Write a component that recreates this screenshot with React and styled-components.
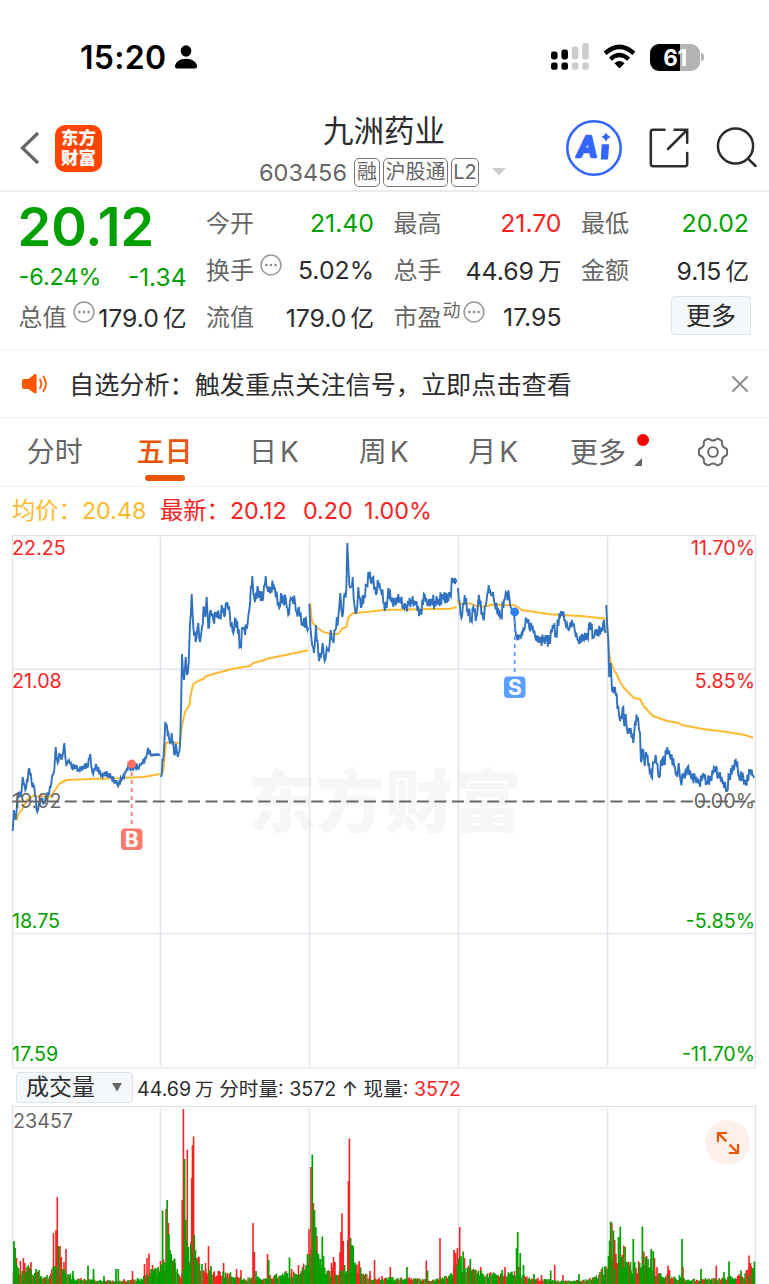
import React from "react";
import styled, { createGlobalStyle } from "styled-components";

const GREEN = "#00a000";
const RED = "#fb2222";
const INK = "#2c2c2e";
const GREY = "#666666";
const ORANGE = "#ea5504";
const FONT = `Inter, "Noto Sans CJK SC", sans-serif`;

// one entry per trading day, [x, y] pairs
const PRICE_DAYS = [
  [[12.7,831],[14,810],[15.7,819],[18.3,792],[20.7,797],[22.7,777],[25.3,790],[29.3,768],[31.7,783],[34.3,787],[37.3,812],[40.7,798],[44,802],[48.3,795],[50.7,787],[52.3,775],[54.3,770],[55.7,747],[57.7,763],[59.3,753],[62.3,757],[64.3,743],[66.3,765],[69,760],[71.7,768],[75,765],[78.3,770],[83.3,766],[87.3,767],[90.3,754],[92.3,772],[96.7,767],[101.7,775],[105,772],[111.7,777],[117.3,785],[121.7,780],[125,772],[129.3,767],[135,767],[138,767],[141.7,763],[146,758],[148,748],[150.7,755],[160,754.5]],
  [[161,777],[163.3,760],[165.3,722],[168.3,733],[170,743],[171.7,733],[174,753],[176.7,750],[178.7,753],[180.3,737],[182,654],[184,680],[185.7,657],[187,675],[188.7,663],[190,623],[191.7,594],[193.3,627],[195.7,642],[198.3,623],[200,642],[202,627],[204.3,608],[205.3,617],[206.7,597],[208.3,628],[210.7,610],[213.3,620],[216.7,612],[220,617],[221.7,605],[224.3,617],[227.3,602],[230,617],[233.3,633],[235.7,619],[240.3,645],[242.7,628],[246.7,629],[249.3,610],[252.3,576],[254.3,598],[258.3,590],[262.3,601],[265.7,576],[267.3,588],[270.7,587],[275,589],[279.3,608],[281,593],[283.3,602],[285.7,598],[288.3,615],[290.7,598],[295,602],[296.7,612],[299,608],[302.3,625],[304,618],[306.7,627],[308.3,627.5]],
  [[309.3,604],[311.3,637],[314,653],[316,625],[318.3,653],[320.7,658],[322.7,643],[324.7,661],[326.7,648],[328.7,651],[330.7,630],[332.7,640],[335.3,630],[338.3,617],[340.3,593],[342.3,617],[344.7,593],[346.3,590],[347.3,543],[349.3,585],[351,587],[352.7,577],[354.7,607],[356.3,613],[358.3,587],[361,608],[364,595],[366.7,585],[368.3,572],[370.7,582],[373.3,577],[376,595],[377.7,580],[381,590],[384,603],[386.7,608],[388.3,588],[390.7,600],[395,602],[400,600],[403.3,606],[406,607],[408,601],[415,602],[420.7,612],[424.7,595],[427.3,605],[431.7,602],[437.3,602],[442.7,597],[450,595],[452.7,580],[456.7,582]],
  [[458,588],[461.3,618],[464.7,595],[467.7,610],[471,620],[473.3,607],[476.3,617],[479,595],[483,618],[485.7,605],[488.7,585],[491,595],[493,592],[495,605],[501,616],[504,600],[506.7,593],[509.3,597],[511.3,608],[514.3,617],[516,635],[520,637],[524,630],[526.7,620],[529.3,628],[532.7,627],[535.3,638],[539.3,642],[544,637],[549.3,643],[552.7,625],[556,635],[559.3,615],[562,612],[565,620],[568.7,630],[572,620],[574.7,630],[578.3,641],[583.3,637],[587.3,638],[590.3,622],[593.3,638],[596,630],[601.7,631],[604,620],[606,632]],
  [[606.3,605],[608.3,640],[609.2,677],[610.7,663],[612,690],[615,687],[619,715],[621,717],[623.3,707],[624.2,726],[625.7,714],[627.7,733],[630.7,728],[633.3,743],[635,723],[638,717],[640,733],[640.9,762],[643.3,750],[644.7,766],[646,752],[651.3,777],[653.7,763],[655.7,755],[659,777],[661.7,760],[664,763],[667.3,747],[670,757],[675,767],[677.3,777],[678.7,763],[680.7,781],[684,775],[688.3,766],[691,778],[695,777],[699.3,783],[703.3,774],[706.7,782],[710.7,779],[714.7,768],[718.3,775],[723.3,782],[727,791],[729.3,775],[733.3,770],[735.7,760],[739,777],[743.3,777],[745.7,783],[750,770],[754,778]],
];

const AVERAGE_DAYS = [
  [[16.7,820],[18.5,814],[21.7,810],[26.7,800],[33,796],[50,797],[55,790],[60,783],[66.7,780],[90,779],[117,778.3],[143,777],[152,775.5],[160,774]],
  [[161,776],[163.3,770],[164.3,760],[166,743],[170,742],[180,743],[181.7,727],[185,712],[189.3,705],[191,693],[193.3,684],[198.3,681],[203,679],[206.7,676],[216.7,673],[233.3,668.7],[250,666],[253.3,663],[265,660],[267,658.7],[286.7,654.7],[308.3,650.3]],
  [[310,603],[312,622],[316.7,627.3],[323.3,632],[331,634],[338.3,634],[341.7,629],[346.7,626.7],[348.3,617.3],[352.7,613.3],[366.7,612],[383.3,610],[406,609.6],[433.3,609],[450,608.7],[456.7,607]],
  [[458,600],[458.7,604],[470,603.3],[475,605.7],[483.3,606.7],[491.7,604.7],[515,605.3],[521.7,610],[550,614.3],[583.3,616.3],[606.7,618.7]],
  [[606.7,618.7],[608,640],[609.3,655],[611,663],[614,670],[617,675],[620,682],[623.3,687],[628,692],[634,698],[640,699],[643,705],[649,712],[653,716],[667,721],[678,722.7],[681.7,725],[703,729],[727,732],[745,735],[753,737.7]],
];

// x, top, then g/r
const SPIKES = `14 1241 g,15.2 1248 g,16.5 1258 r,18 1268 r,20.4 1261 r,23.4 1258 r,24.8 1263 r,28 1267 r,29.5 1268 r,31 1262 r,36 1269 g,39 1270 g,
53.5 1233 r,54.8 1266 g,56 1230 r,57.3 1197 r,58.6 1246 g,60 1246 r,61.3 1257 r,62.5 1269 g,64 1262 r,66 1249 r,70 1275 g,73 1271 g,81 1278 r,88 1265.5 g,93.5 1269 g,104 1276 g,116 1269 g,118.3 1269 g,124 1279 r,132.5 1271 r,
144.5 1264 r,147 1258 r,149 1253.5 r,151 1269 g,152.5 1265 r,155 1268 g,158 1267 g,160.5 1261 r,162.6 1210.5 g,164 1262 g,166 1209 r,167.2 1200 g,168.4 1223 r,168.9 1234 g,170 1250 g,171.2 1254 g,172.5 1261 r,173.7 1260 r,175 1263 g,
182.2 1200 r,183.4 1109 r,184.6 1159 g,185.8 1220 g,186.4 1241 g,187.3 1149.5 r,188.5 1247 g,190 1262 r,191 1242 r,191.7 1178 r,192.5 1145 r,193.6 1136.5 r,194.3 1235 g,195.4 1250 g,196.8 1258 r,199 1257 r,205.5 1263 r,208.5 1246 r,211 1266 g,214 1272 r,220 1272 r,223.6 1263 r,227.5 1273 r,236.5 1269 r,241 1270 r,
253 1223 r,254.4 1252 r,256 1271 g,267.5 1254 r,268.7 1260 g,275 1275 r,286 1271 r,289.5 1257.5 g,291.7 1269 r,298.5 1265 r,303.5 1266 r,307.5 1254 g,
309 1229 r,311 1167 r,312.3 1154.5 g,313.4 1203 r,314.5 1210 g,315.8 1227 g,317 1236 r,318.5 1254 g,320.3 1259 g,322.3 1236.5 g,323.5 1256 g,331.5 1263 r,333.5 1257 r,335 1262 r,340 1252 r,341 1232 r,342 1213.5 r,343.3 1241 r,344.6 1265 g,347.8 1240 r,348.4 1181 r,349.4 1138.5 r,350.6 1238 g,352 1245 g,353.2 1246 g,355 1263 g,359 1261 r,370 1271 r,374.5 1260 r,382 1276 r,
390.3 1267 r,407 1267 g,426.3 1260.5 r,427.5 1270.5 g,440 1238 r,454 1250 r,455.5 1253 r,457.4 1248 r,459.7 1227 r,461 1256 g,463.2 1251.5 g,464.5 1258 r,470.3 1259 g,472 1271 g,476 1270 r,480.7 1267 r,489.5 1273 r,502.3 1270 g,505 1267 r,516.6 1248 g,517.7 1232 g,518.8 1267 r,520.2 1253 g,523.5 1265 g,534 1274 g,541.5 1275 r,550.7 1270.5 g,554.7 1265 r,563 1275 r,579 1274 g,595 1277 g,602 1274 r,605.3 1269 r,
608.5 1256 g,609.6 1241 g,610.6 1221.5 g,611.9 1223 r,613.4 1230.5 g,614.7 1240 r,615.9 1254 r,618.5 1237 g,620.3 1226.5 g,622 1257 g,623.8 1245.5 r,625.2 1247 g,627 1262 g,628.5 1263 r,630.5 1262 g,633.3 1239 g,635 1268 r,642.4 1226.5 g,643.8 1251.5 r,645.5 1257 g,646.6 1256 r,648 1259 g,651.2 1249 g,653.2 1251 g,654.5 1258 r,657 1267 r,668 1265.5 r,669.5 1270 r,679.5 1275 g,682 1239 g,683 1267 r,701 1269 g,705.5 1278 g,716.3 1265.5 r,724 1272 g,729 1261.5 g,741 1270.5 g,737.5 1276 r,749 1255.5 r,750.6 1263 r,752.5 1268 g,754.4 1261.5 g`
  .split(",")
  .map((s) => s.trim().split(" "));

// usual height of the small bars along the day
const ENVELOPE = [[13,18],[30,14],[45,5],[54,14],[66,12],[76,4],[100,3],[125,2],[142,5],[155,12],[160,18],[175,22],[181,5],[186,30],[194,32],[200,18],[215,10],[232,10],[244,4],[262,6],[290,10],[302,12],[309,28],[318,26],[327,12],[345,18],[352,30],[362,12],[372,4],[385,5],[410,5],[435,3],[450,8],[459,22],[466,16],[478,12],[500,8],[515,10],[530,5],[560,2],[585,3],[598,7],[608,20],[620,26],[632,16],[650,22],[658,10],[672,6],[700,3],[730,6],[745,9],[755,18]];

const GRID_X = [160.5, 309.5, 458.5, 607.5];

// the latin part of a label stands a little apart
const TABS = [
  { label: "分时" },
  { label: "五日", active: true },
  { label: "日", period: "K" },
  { label: "周", period: "K" },
  { label: "月", period: "K" },
];

const noise = (n) => {
  const v = Math.sin(n * 127.1 + 3.7) * 43758.5453;
  return v - Math.floor(v);
};

const lerpAt = (points, x) => {
  for (let i = 1; i < points.length; i++) {
    const [x0, y0] = points[i - 1];
    const [x1, y1] = points[i];
    if (x <= x1) return y0 + ((y1 - y0) * (x - x0)) / (x1 - x0);
  }
  return points[points.length - 1][1];
};

const toPath = (points) => "M" + points.map((p) => p.join(" ")).join("L");

// adds the tick by tick jitter between the traced turns
const jagged = (points, amp) => {
  const out = [points[0]];
  for (let i = 1; i < points.length; i++) {
    const [x0, y0] = points[i - 1];
    const [x1, y1] = points[i];
    const steps = Math.floor((x1 - x0) / 0.75);
    const calm = x0 > 150 && x1 < 161 ? 0.15 : 1;
    for (let s = 1; s < steps; s++) {
      const x = x0 + ((x1 - x0) * s) / steps;
      const sign = s % 2 ? 1 : -1;
      const y = lerpAt([points[i - 1], points[i]], x) + sign * calm * (0.5 + noise(x) * amp);
      out.push([x.toFixed(1), y.toFixed(1)]);
    }
    out.push([x1, y1]);
  }
  return toPath(out);
};

const JITTER = [3.5, 7, 7, 6.5, 5.5];

const volumePath = (color) => {
  let d = "";
  for (let i = 0; i < 598; i++) {
    const x = 13.5 + i * 1.24;
    const isGreen = noise(i + 900) > 0.42;
    if (isGreen !== (color === "g")) continue;
    const h = 1 + lerpAt(ENVELOPE, x) * (0.5 + noise(i) * 0.75);
    d += `M${x.toFixed(1)} 1286V${(1284 - h).toFixed(1)}`;
  }
  return d;
};

const spikePath = (color) =>
  SPIKES.filter((s) => s[2] === color).map((s) => `M${s[0]} 1286V${s[1]}`).join("");

const Dots = () => (
  <DotsIcon viewBox="0 0 22 22">
    <circle cx="11" cy="11" r="9.9" fill="none" stroke="#999" strokeWidth="1.5" />
    <circle cx="6.4" cy="11" r="1.3" fill="#888" />
    <circle cx="11" cy="11" r="1.3" fill="#888" />
    <circle cx="15.6" cy="11" r="1.3" fill="#888" />
  </DotsIcon>
);

const StatusArea = () => (
  <StatusBar>
    <Clock>15:20</Clock>
    <svg width="22" height="24" viewBox="0 0 22 24">
      <ellipse cx="11" cy="6" rx="5.3" ry="5.8" />
      <path d="M0 21.5C0 17 5 13.7 11 13.7S22 17 22 21.5Q22 23.6 20 23.6H2Q0 23.6 0 21.5Z" />
    </svg>
    <StatusRight>
      <svg width="38" height="28" viewBox="0 0 38 28">
        <rect x="0" y="8.5" width="6.6" height="8" rx="2.4" />
        <rect x="10.4" y="6.5" width="6.6" height="10" rx="2.4" />
        <rect x="20.8" y="3.5" width="6.6" height="13" rx="2.4" fill="#ccc" />
        <rect x="31.2" y="0" width="6.6" height="16.5" rx="2.4" fill="#ccc" />
        <rect x="0" y="19.5" width="6.6" height="7.3" rx="2.2" />
        <rect x="10.4" y="19.5" width="6.6" height="7.3" rx="2.2" />
        <rect x="20.8" y="19.5" width="6.6" height="7.3" rx="2.2" fill="#ccc" />
        <rect x="31.2" y="19.5" width="6.6" height="7.3" rx="2.2" fill="#ccc" />
      </svg>
      <svg width="33" height="26" viewBox="0 0 34 26">
        <path d="M2.2 9.1Q17 -4 31.8 9.1" fill="none" stroke="#000" strokeWidth="4.6" />
        <path d="M7.6 15.2Q17 6.8 26.4 15.2" fill="none" stroke="#000" strokeWidth="4.4" />
        <path d="M11.8 19.4Q17 14.6 22.2 19.4L17.8 24Q17 24.7 16.2 24Z" />
      </svg>
      <Battery>
        <BatteryBody>61</BatteryBody>
        <BatteryTip />
      </Battery>
    </StatusRight>
  </StatusBar>
);

const TopBar = () => (
  <Header>
    <BackIcon viewBox="0 0 20 34">
      <path d="M18 2L2.4 17L18 32" fill="none" stroke="#666" strokeWidth="3.2" />
    </BackIcon>
    <AppLogo>东方财富</AppLogo>
    <StockTitle>
      <StockName>九洲药业</StockName>
      <StockMeta>
        <StockCode>603456</StockCode>
        <Tag $w={26}>融</Tag>
        <Tag $w={65}>沪股通</Tag>
        <Tag $w={28}>L2</Tag>
        <svg width="14" height="8" viewBox="0 0 14 8">
          <path d="M0 0H14L7 7.4Z" fill="#ccc" />
        </svg>
      </StockMeta>
    </StockTitle>
    <Actions>
      <svg width="56" height="56" viewBox="0 0 56 56">
        <circle cx="28" cy="28" r="26.7" fill="none" stroke="#3366ff" strokeWidth="2.6" />
        <text x="11.5" y="37.4" fontFamily="Lato, Inter, sans-serif" fontStyle="italic" fontWeight="900" fontSize="29" fill="#3366ff" stroke="#3366ff" strokeWidth="2.6" strokeLinejoin="round">A</text>
        <path d="M36.4 24.2H42.2Q43.2 24.2 43.1 25.2L42.1 38.4Q42 39.6 40.8 39.6H36Q34.8 39.6 34.9 38.4L35.6 25Q35.6 24.2 36.4 24.2Z" fill="#3366ff" />
        <path d="M40 12.4Q41.2 15.8 44.6 17Q41.2 18.2 40 21.6Q38.8 18.2 35.4 17Q38.8 15.8 40 12.4Z" fill="#3366ff" />
      </svg>
      <svg width="40" height="40" viewBox="0 0 40 40" fill="none" stroke="#2c2c2e" strokeWidth="2.5" strokeLinecap="round">
        <path d="M15.5 1.8H4Q1.8 1.8 1.8 4V36Q1.8 38.2 4 38.2H36Q38.2 38.2 38.2 36V25" />
        <path d="M25.5 1.8H38.2V14.8M38 2L19 21" />
      </svg>
      <svg width="42" height="42" viewBox="0 0 42 42" fill="none" stroke="#2c2c2e" strokeWidth="2.5">
        <circle cx="19.5" cy="19" r="17.6" />
        <path d="M32 31.6L39.6 39" strokeLinecap="round" />
      </svg>
    </Actions>
  </Header>
);

const QuotePanel = () => (
  <Quote>
    <QuoteColumn>
      <BigPrice>20.12</BigPrice>
      <ChangeRow>
        <ChangeRate>-6.24%</ChangeRate>
        <span>-1.34</span>
      </ChangeRow>
      <QuoteRow>
        <Label>总值<Dots /></Label>
        <Value>179.0<Unit>亿</Unit></Value>
      </QuoteRow>
    </QuoteColumn>
    <QuoteColumn>
      <QuoteRow><Label>今开</Label><Value $color={GREEN}>21.40</Value></QuoteRow>
      <QuoteRow><Label>换手<Dots /></Label><Value>5.02%</Value></QuoteRow>
      <QuoteRow><Label>流值</Label><Value>179.0<Unit>亿</Unit></Value></QuoteRow>
    </QuoteColumn>
    <QuoteColumn>
      <QuoteRow><Label>最高</Label><Value $color={RED}>21.70</Value></QuoteRow>
      <QuoteRow><Label>总手</Label><Value>44.69<Unit>万</Unit></Value></QuoteRow>
      <QuoteRow><Label>市盈<Super>动</Super><Dots /></Label><Value>17.95</Value></QuoteRow>
    </QuoteColumn>
    <QuoteColumn>
      <QuoteRow><Label>最低</Label><Value $color={GREEN}>20.02</Value></QuoteRow>
      <QuoteRow><Label>金额</Label><Value>9.15<Unit>亿</Unit></Value></QuoteRow>
      <MoreButton>更多</MoreButton>
    </QuoteColumn>
  </Quote>
);

const NoticeBar = () => (
  <Notice>
    <svg width="26" height="22" viewBox="0 0 26 22">
      <path d="M2 6H6.5L12.4 1.2Q14.6 0 14.6 2.4V19Q14.6 21.4 12.4 20.2L6.5 16H2Q0 16 0 14V8Q0 6 2 6Z" fill="#ff5500" />
      <path d="M18 6.5Q20.6 10.8 18 15M21.4 3.5Q26.4 10.8 21.4 18" fill="none" stroke="#ff5500" strokeWidth="1.8" strokeLinecap="round" />
    </svg>
    <NoticeText>自选分析：触发重点关注信号，立即点击查看</NoticeText>
    <svg width="16" height="16" viewBox="0 0 16 16">
      <path d="M1 1L15 15M15 1L1 15" stroke="#888" strokeWidth="1.8" strokeLinecap="round" />
    </svg>
  </Notice>
);

const ChartTabs = () => (
  <Tabs>
    {TABS.map((tab) => (
      <Tab key={tab.label} $active={tab.active}>
        {tab.label}
        {tab.period && <Period>{tab.period}</Period>}
      </Tab>
    ))}
    <MoreTab>
      更多
      <RedDot />
      <Corner viewBox="0 0 8 8"><path d="M8 0V8H0Z" fill="#666" /></Corner>
    </MoreTab>
    <GearIcon viewBox="0 0 32 32" fill="none" stroke="#666" strokeWidth="2.1">
      <circle cx="16" cy="16" r="5.2" />
      <path d="M9.6 2.2Q11.2 1.4 12.4 2.4Q16 5.2 19.6 2.4Q20.8 1.4 22.4 2.2L24.6 3.6Q26 4.6 25.7 6.2Q25.4 10.6 29.4 12Q31 12.6 31 14V18Q31 19.4 29.4 20Q25.4 21.4 25.7 25.8Q26 27.4 24.6 28.4L22.4 29.8Q20.8 30.6 19.6 29.6Q16 26.8 12.4 29.6Q11.2 30.6 9.6 29.8L7.4 28.4Q6 27.4 6.3 25.8Q6.6 21.4 2.6 20Q1 19.4 1 18V14Q1 12.6 2.6 12Q6.6 10.6 6.3 6.2Q6 4.6 7.4 3.6Z" />
    </GearIcon>
  </Tabs>
);

const PriceChart = () => (
  <PriceSvg viewBox="0 535 769 534">
    <text x="248" y="827" fontSize="68" fontWeight="900" fill="#f6f6f6" textLength="273">东方财富</text>
    <g stroke="#e2e5ef" strokeWidth="1.6">
      {GRID_X.map((x) => <path key={x} d={`M${x} 537V1066`} />)}
      <path d="M12.5 669.3H755M12.5 933.5H755" />
    </g>
    <path d="M12.5 1068V535.5H755.5V1068Z" fill="none" stroke="#dcdfe6" strokeWidth="1.2" />
    <g fill="none" stroke="#ffb92e" strokeWidth="2" strokeLinejoin="round">
      {AVERAGE_DAYS.map((day, i) => <path key={i} d={toPath(day)} />)}
    </g>
    <g fill="none" stroke="#3072c0" strokeWidth="1.9">
      {PRICE_DAYS.map((day, i) => <path key={i} d={jagged(day, JITTER[i])} />)}
    </g>
    <AxisText x="12" y="555" fill={RED}>22.25</AxisText>
    <AxisText x="12" y="688" fill={RED}>21.08</AxisText>
    <AxisText x="12" y="807.5" fill={GREY}>19.92</AxisText>
    <AxisText x="12" y="928" fill={GREEN}>18.75</AxisText>
    <AxisText x="12" y="1061" fill={GREEN}>17.59</AxisText>
    <AxisText x="755" y="555" fill={RED} textAnchor="end">11.70%</AxisText>
    <AxisText x="755" y="688" fill={RED} textAnchor="end">5.85%</AxisText>
    <AxisText x="755" y="807.5" fill={GREY} textAnchor="end">0.00%</AxisText>
    <AxisText x="755" y="928" fill={GREEN} textAnchor="end">-5.85%</AxisText>
    <AxisText x="755" y="1061" fill={GREEN} textAnchor="end">-11.70%</AxisText>
    <path d="M12 801.5H755" stroke="#666" strokeWidth="2" strokeDasharray="12 5.6" />
    <path d="M131.7 764V828" stroke="#fd7a6c" strokeWidth="1.8" strokeDasharray="4 4" />
    <circle cx="131.7" cy="764" r="4.4" fill="#fd7061" />
    <rect x="121" y="828.5" width="21.5" height="21.5" rx="4" fill="#fd7a6c" />
    <MarkText x="131.8" y="847">B</MarkText>
    <path d="M514.7 612V676" stroke="#5ba0ff" strokeWidth="1.8" strokeDasharray="4 4" />
    <circle cx="514.7" cy="612" r="4.4" fill="#2f80f5" />
    <rect x="504" y="676.5" width="21.5" height="21.5" rx="4" fill="#5ba0ff" />
    <MarkText x="514.8" y="695">S</MarkText>
  </PriceSvg>
);

const VolumeChart = () => (
  <VolumeBox>
    <VolumeSvg viewBox="0 1106 769 178">
      <g stroke="#e2e5ef" strokeWidth="1.6">
        {GRID_X.map((x) => <path key={x} d={`M${x} 1109V1284`} />)}
      </g>
      <path d="M12.5 1286V1106.5H755.5V1286" fill="none" stroke="#dcdfe6" strokeWidth="1.2" />
      <AxisText x="13" y="1128" fill={GREY}>23457</AxisText>
      <path d={volumePath("r")} stroke="#fb2222" strokeWidth="1.4" />
      <path d={spikePath("r")} stroke="#fb2222" strokeWidth="1.6" />
      <path d={volumePath("g")} stroke={GREEN} strokeWidth="1.6" />
      <path d={spikePath("g")} stroke={GREEN} strokeWidth="1.7" />
    </VolumeSvg>
    <ExpandButton>
      <svg width="24" height="24" viewBox="0 0 24 24" fill="none" stroke={ORANGE} strokeWidth="2.2">
        <path d="M11 2H2V11M2.4 2.4L10.4 10.4M13 22H22V13M21.6 21.6L13.6 13.6" />
      </svg>
    </ExpandButton>
  </VolumeBox>
);

export default function App() {
  return (
    <Screen>
      <GlobalStyle />
      <StatusArea />
      <TopBar />
      <QuotePanel />
      <NoticeBar />
      <ChartTabs />
      <Legend>
        <LegendItem $color="#fdb92c" $w={148}>均价：<span>20.48</span></LegendItem>
        <LegendItem $color={RED} $w={143}>最新：<span>20.12</span></LegendItem>
        <LegendItem $color={RED} $w={61}><span>0.20</span></LegendItem>
        <LegendItem $color={RED} $w={80}><span>1.00%</span></LegendItem>
      </Legend>
      <PriceChart />
      <VolumeBar>
        <VolumeSelect>
          成交量
          <svg width="10" height="9" viewBox="0 0 10 9"><path d="M0 0H10L5 8.6Z" fill="#666" /></svg>
        </VolumeSelect>
        <VolumeInfo>
          44.69<Unit>万</Unit> 分时量: 3572 ↑ 现量: <Hot>3572</Hot>
        </VolumeInfo>
      </VolumeBar>
      <VolumeChart />
    </Screen>
  );
}

const GlobalStyle = createGlobalStyle`
  * { box-sizing: border-box; }
  body { margin: 0; background: #fff; overflow: hidden; }
  svg { display: block; flex: none; }
`;

const Screen = styled.div`
  width: 769px;
  height: 1284px;
  overflow: hidden;
  background: #fff;
  color: ${INK};
  font-family: ${FONT};
  white-space: nowrap;
`;

const StatusBar = styled.div`
  height: 106px;
  padding: 8px 65px 0 80px;
  display: flex;
  align-items: center;
  gap: 9px;
`;

const Clock = styled.div`
  width: 86px;
  color: #000;
  font-size: 32px;
  font-weight: 600;
  letter-spacing: 0.3px;
`;

const StatusRight = styled.div`
  margin-left: auto;
  display: flex;
  align-items: center;
  gap: 14px;
`;

const Battery = styled.div`
  display: flex;
  align-items: center;
  gap: 1px;
`;

const BatteryBody = styled.div`
  width: 50px;
  height: 27px;
  border-radius: 9px;
  background: linear-gradient(90deg, #000 61%, #b3b3b3 61%);
  color: #fff;
  font-size: 22.5px;
  font-weight: 700;
  letter-spacing: -0.5px;
  line-height: 28px;
  text-align: center;
`;

const BatteryTip = styled.div`
  width: 3px;
  height: 8px;
  border-radius: 0 3px 3px 0;
  background: #b3b3b3;
`;

const Header = styled.header`
  height: 86px;
  display: flex;
  align-items: center;
  padding: 0 11px 0 20px;
  border-bottom: 2px solid #ececec;
`;

const BackIcon = styled.svg`
  width: 20px;
  height: 34px;
`;

const AppLogo = styled.div`
  width: 47px;
  height: 47px;
  margin-left: 15px;
  padding: 3px 6px;
  border-radius: 10px;
  background: #ff4400;
  color: #fff;
  font-size: 17.4px;
  font-weight: 900;
  line-height: 20px;
  white-space: normal;
`;

const StockTitle = styled.div`
  width: 250px;
  margin-left: 157px;
  padding-top: 4px;
  display: flex;
  flex-direction: column;
`;

const StockName = styled.div`
  width: 250px;
  text-align: center;
  font-size: 30.5px;
  line-height: 40px;
`;

const StockMeta = styled.div`
  height: 38px;
  padding-top: 4px;
  display: flex;
  align-items: center;
  gap: 3px;
  svg { margin-left: 10px; }
`;

const StockCode = styled.div`
  width: 92px;
  color: ${GREY};
  font-size: 23.5px;
`;

const Tag = styled.div`
  width: ${({ $w }) => $w}px;
  height: 29px;
  border: 1.4px solid #777;
  border-radius: 5px;
  color: ${GREY};
  font-size: 20px;
  line-height: 27px;
  text-align: center;
`;

const Actions = styled.div`
  margin-left: auto;
  display: flex;
  align-items: center;
  gap: 27px;
`;

const Quote = styled.section`
  height: 158px;
  padding: 7px 20px 0 18.5px;
  display: grid;
  grid-template-columns: repeat(4, 168px);
  justify-content: space-between;
  border-bottom: 1px solid #f2f2f2;
`;

const QuoteColumn = styled.div`
  display: flex;
  flex-direction: column;
`;

const BigPrice = styled.div`
  height: 54px;
  margin-left: -1px;
  color: ${GREEN};
  font-size: 54px;
  font-weight: 600;
  line-height: 55px;
`;

const ChangeRow = styled.div`
  height: 40px;
  display: flex;
  justify-content: space-between;
  color: ${GREEN};
  font-size: 24.5px;
  line-height: 49px;
`;

const ChangeRate = styled.span`
  font-size: 23.3px;
  line-height: 47px;
`;

const QuoteRow = styled.div`
  height: 47px;
  display: flex;
  justify-content: space-between;
  align-items: center;
`;

const Label = styled.div`
  display: flex;
  align-items: center;
  padding-bottom: 2px;
  color: ${GREY};
  font-size: 24px;
`;

const DotsIcon = styled.svg`
  width: 22px;
  height: 22px;
  margin: -7px 0 0 6px;
`;

const Super = styled.span`
  margin: -14px -4px 0 1px;
  font-size: 18px;
`;

const Value = styled.div`
  color: ${({ $color }) => $color || INK};
  font-size: 24.8px;
`;

const Unit = styled.span`
  margin-left: 4px;
  font-size: 0.95em;
`;

const MoreButton = styled.button`
  align-self: flex-end;
  width: 80px;
  height: 39px;
  margin: 3px -2px 0 0;
  padding: 0;
  border: 1.5px solid #dfe3e8;
  border-radius: 4px;
  background: #f5f8fa;
  color: ${INK};
  font-family: ${FONT};
  font-size: 25px;
  line-height: 36px;
`;

const Notice = styled.div`
  height: 68px;
  padding: 0 21px 0 22px;
  display: flex;
  align-items: center;
  border-bottom: 1px solid #eee;
`;

const NoticeText = styled.div`
  flex: 1;
  margin-left: 21px;
  padding-bottom: 2px;
  font-size: 25.15px;
`;

const Tabs = styled.nav`
  height: 69px;
  display: flex;
  align-items: center;
  border-bottom: 1px solid #eee;
`;

const Tab = styled.div`
  position: relative;
  width: 109.6px;
  height: 68px;
  color: ${({ $active }) => ($active ? ORANGE : GREY)};
  font-size: 28px;
  font-weight: ${({ $active }) => ($active ? 500 : 400)};
  line-height: 68px;
  text-align: center;
  &::after {
    content: "";
    display: ${({ $active }) => ($active ? "block" : "none")};
    position: absolute;
    left: 35px;
    bottom: 5px;
    width: 40px;
    height: 6px;
    border-radius: 3px;
    background: ${ORANGE};
  }
`;

const Period = styled.span`
  margin-left: 3px;
`;

const MoreTab = styled.div`
  position: relative;
  margin-left: 22px;
  padding-bottom: 2px;
  width: 76px;
  color: ${GREY};
  font-size: 28px;
`;

const RedDot = styled.i`
  position: absolute;
  top: 3px;
  right: -3px;
  width: 12px;
  height: 12px;
  border-radius: 50%;
  background: #ff0000;
`;

const Corner = styled.svg`
  position: absolute;
  right: 4px;
  bottom: 7px;
  width: 8px;
  height: 8px;
`;

const GearIcon = styled.svg`
  width: 32px;
  height: 30px;
  margin-left: 51px;
`;

const Legend = styled.div`
  height: 48px;
  padding: 0 0 1px 12px;
  display: flex;
  align-items: baseline;
  line-height: 48px;
`;

const LegendItem = styled.div`
  width: ${({ $w }) => $w}px;
  color: ${({ $color }) => $color};
  font-size: 23.3px;
`;

const PriceSvg = styled.svg`
  width: 769px;
  height: 534px;
  font-family: ${FONT};
`;

const AxisText = styled.text`
  font-size: 19.7px;
`;

const MarkText = styled.text`
  fill: #fff;
  font-size: 21px;
  font-weight: 700;
  text-anchor: middle;
`;

const VolumeBar = styled.div`
  height: 37px;
  padding: 0 0 1px 16px;
  display: flex;
  align-items: center;
`;

const VolumeSelect = styled.div`
  width: 117px;
  height: 31px;
  padding: 0 10px 0 9px;
  display: flex;
  align-items: center;
  justify-content: space-between;
  border: 1.5px solid #dfe3e8;
  border-radius: 3px;
  background: #f5f8fa;
  font-size: 23px;
  line-height: 26px;
`;

const VolumeInfo = styled.div`
  margin-left: 4px;
  font-size: 19.6px;
`;

const Hot = styled.span`
  color: ${RED};
`;

const VolumeBox = styled.div`
  position: relative;
  height: 178px;
`;

const VolumeSvg = styled.svg`
  width: 769px;
  height: 178px;
  font-family: ${FONT};
`;

const ExpandButton = styled.div`
  position: absolute;
  top: 14px;
  right: 19px;
  width: 45px;
  height: 45px;
  border-radius: 50%;
  background: #fdf0ea;
  display: flex;
  align-items: center;
  justify-content: center;
`;
